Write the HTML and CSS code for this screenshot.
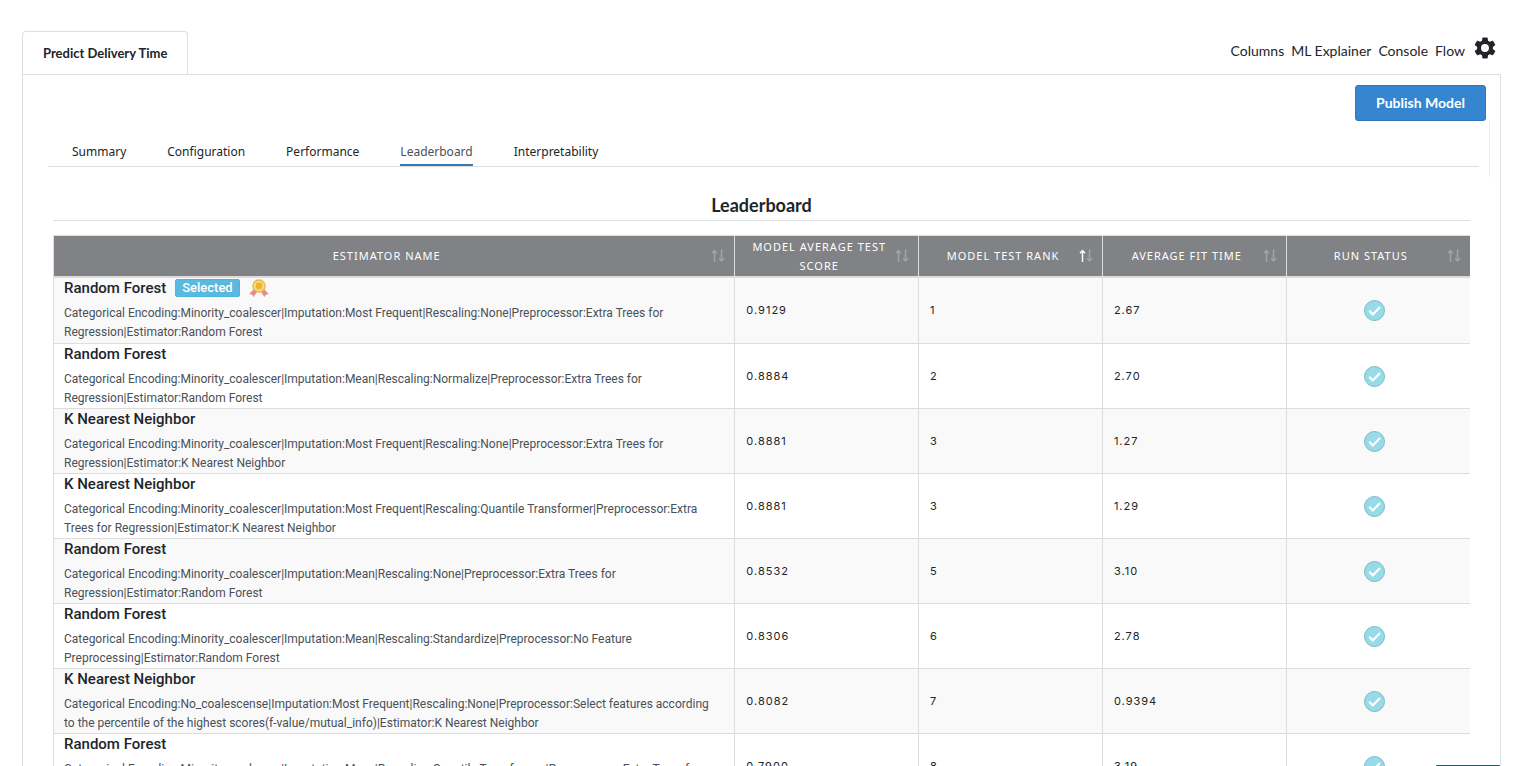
FILE: index.html
```html
<!DOCTYPE html>
<html lang="en">
<head>
  <meta charset="UTF-8" />
  <meta name="viewport" content="width=device-width, initial-scale=1.0"/>
  <title>Predict Delivery Time</title>
  <link rel="stylesheet" href="styles.css">
</head>
<body>

  <!-- Shared icons -->
  <svg class="sprite" aria-hidden="true">
    <symbol id="icon-check" viewBox="0 0 21 21">
      <circle cx="10.5" cy="10.5" r="10" fill="#97dbe8" stroke="#7fb7c4"/>
      <path d="M5.200 10.800l3.600 3.600 7.200-7.400" fill="none" stroke="#fff" stroke-width="2.200"/>
    </symbol>
    <symbol id="icon-sort" viewBox="0 0 14 14">
      <path class="up" d="M3.5 13V1.5M1 4.200l2.500-2.700L6 4.200"/>
      <path class="down" d="M10.5 .5V12M8 9.300l2.500 2.700L13 9.300"/>
    </symbol>
  </svg>

  <div class="page">
    <header class="topbar">
      <h1 class="project-tab">Predict Delivery Time</h1>
      <nav class="tools">
        <a href="#">Columns</a>
        <a href="#">ML Explainer</a>
        <a href="#">Console</a>
        <a href="#">Flow</a>
        <button class="gear" aria-label="Settings">
          <svg viewBox="2 2 20 20"><path d="M19.14 12.94c.04-.3.06-.61.06-.94s-.02-.64-.07-.94l2.03-1.58a.49.49 0 0 0 .12-.61l-1.92-3.32a.49.49 0 0 0-.59-.22l-2.39.96a7 7 0 0 0-1.62-.94l-.36-2.54a.48.48 0 0 0-.48-.41h-3.84a.47.47 0 0 0-.47.41l-.36 2.54c-.59.24-1.13.57-1.62.94l-2.39-.96a.48.48 0 0 0-.59.22L2.74 8.87a.47.47 0 0 0 .12.61l2.03 1.58a6 6 0 0 0 0 1.88l-2.03 1.58a.49.49 0 0 0-.12.61l1.92 3.32c.12.22.37.29.59.22l2.39-.96c.5.38 1.03.7 1.62.94l.36 2.54c.05.24.24.41.48.41h3.84c.24 0 .44-.17.47-.41l.36-2.54c.59-.24 1.13-.56 1.62-.94l2.39.96c.22.08.47 0 .59-.22l1.92-3.32a.47.47 0 0 0-.12-.61zM12 15.6a3.6 3.6 0 1 1 0-7.2 3.6 3.6 0 0 1 0 7.2z"/></svg>
        </button>
      </nav>
    </header>

    <main class="panel">
      <div class="actions">
        <button class="publish">Publish Model</button>
      </div>

      <div class="subnav-wrap">
        <nav class="subnav">
          <a href="#">Summary</a>
          <a href="#">Configuration</a>
          <a href="#">Performance</a>
          <a href="#" class="active">Leaderboard</a>
          <a href="#">Interpretability</a>
        </nav>
      </div>

      <section class="board">
        <h2>Leaderboard</h2>
        <table>
          <thead>
            <tr>
              <th class="name-col"><div class="head"><span>Estimator Name</span><svg class="sort"><use href="#icon-sort"/></svg></div></th>
              <th><div class="head"><span>Model Average Test Score</span><svg class="sort"><use href="#icon-sort"/></svg></div></th>
              <th><div class="head"><span>Model Test Rank</span><svg class="sort asc"><use href="#icon-sort"/></svg></div></th>
              <th><div class="head"><span>Average Fit Time</span><svg class="sort"><use href="#icon-sort"/></svg></div></th>
              <th><div class="head"><span>Run Status</span><svg class="sort"><use href="#icon-sort"/></svg></div></th>
            </tr>
          </thead>
          <tbody>
            <tr>
              <td class="estimator">
                <h3>Random Forest <span class="badge">Selected</span>
                  <svg class="medal" viewBox="0 0 20 18">
                    <path d="M4.500 10.500l3.500 2.500-3.500 5-1.300-2.200L.3 15zM15.500 10.500L12 13l3.500 5 1.300-2.200 2.900-.8z" fill="#e28c8c"/>
                    <circle cx="10" cy="7" r="6" fill="#f8dc8c" stroke="#e8b84a" stroke-width="1.500"/>
                    <circle cx="10" cy="7" r="3.400" fill="#f0b429"/>
                  </svg>
                </h3>
                <p>Categorical Encoding:Minority_coalescer|Imputation:Most Frequent|Rescaling:None|Preprocessor:Extra Trees for Regression|Estimator:Random Forest</p>
              </td>
              <td>0.9129</td><td>1</td><td>2.67</td>
              <td class="status"><svg role="img" aria-label="Completed"><use href="#icon-check"/></svg></td>
            </tr>
            <tr>
              <td class="estimator">
                <h3>Random Forest</h3>
                <p>Categorical Encoding:Minority_coalescer|Imputation:Mean|Rescaling:Normalize|Preprocessor:Extra Trees for Regression|Estimator:Random Forest</p>
              </td>
              <td>0.8884</td><td>2</td><td>2.70</td>
              <td class="status"><svg role="img" aria-label="Completed"><use href="#icon-check"/></svg></td>
            </tr>
            <tr>
              <td class="estimator">
                <h3>K Nearest Neighbor</h3>
                <p>Categorical Encoding:Minority_coalescer|Imputation:Most Frequent|Rescaling:None|Preprocessor:Extra Trees for Regression|Estimator:K Nearest Neighbor</p>
              </td>
              <td>0.8881</td><td>3</td><td>1.27</td>
              <td class="status"><svg role="img" aria-label="Completed"><use href="#icon-check"/></svg></td>
            </tr>
            <tr>
              <td class="estimator">
                <h3>K Nearest Neighbor</h3>
                <p>Categorical Encoding:Minority_coalescer|Imputation:Most Frequent|Rescaling:Quantile Transformer|Preprocessor:Extra Trees for Regression|Estimator:K Nearest Neighbor</p>
              </td>
              <td>0.8881</td><td>3</td><td>1.29</td>
              <td class="status"><svg role="img" aria-label="Completed"><use href="#icon-check"/></svg></td>
            </tr>
            <tr>
              <td class="estimator">
                <h3>Random Forest</h3>
                <p>Categorical Encoding:Minority_coalescer|Imputation:Mean|Rescaling:None|Preprocessor:Extra Trees for Regression|Estimator:Random Forest</p>
              </td>
              <td>0.8532</td><td>5</td><td>3.10</td>
              <td class="status"><svg role="img" aria-label="Completed"><use href="#icon-check"/></svg></td>
            </tr>
            <tr>
              <td class="estimator">
                <h3>Random Forest</h3>
                <p>Categorical Encoding:Minority_coalescer|Imputation:Mean|Rescaling:Standardize|Preprocessor:No Feature Preprocessing|Estimator:Random Forest</p>
              </td>
              <td>0.8306</td><td>6</td><td>2.78</td>
              <td class="status"><svg role="img" aria-label="Completed"><use href="#icon-check"/></svg></td>
            </tr>
            <tr>
              <td class="estimator">
                <h3>K Nearest Neighbor</h3>
                <p>Categorical Encoding:No_coalescense|Imputation:Most Frequent|Rescaling:None|Preprocessor:Select features according to the percentile of the highest scores(f-value/mutual_info)|Estimator:K Nearest Neighbor</p>
              </td>
              <td>0.8082</td><td>7</td><td>0.9394</td>
              <td class="status"><svg role="img" aria-label="Completed"><use href="#icon-check"/></svg></td>
            </tr>
            <tr>
              <td class="estimator">
                <h3>Random Forest</h3>
                <p>Categorical Encoding:Minority_coalescer|Imputation:Mean|Rescaling:Quantile Transformer|Preprocessor:Extra Trees for Regression|Estimator:Random Forest</p>
              </td>
              <td>0.7900</td><td>8</td><td>3.19</td>
              <td class="status"><svg role="img" aria-label="Completed"><use href="#icon-check"/></svg></td>
            </tr>
          </tbody>
        </table>
      </section>
    </main>
  </div>

  <div class="drawer"></div>

</body>
</html>
```
FILE: styles.css
```css
* { margin: 0; padding: 0; box-sizing: border-box; }
body {
  height: 100vh;
  background: #fff;
  color: #212529;
  font-family: Lato, "Liberation Sans", sans-serif;
  font-size: 14px;
  overflow: hidden;
}

a {
  color: inherit;
  text-decoration: none;
}

.sprite {
  position: absolute;
  width: 0;
  height: 0;
}

.page {
  padding: 31px 27px 0 22px;
}

/* Top bar */
.topbar {
  display: flex;
  justify-content: space-between;
}

.project-tab {
  height: 43px;
  padding: 0 20px;
  border: 1px solid #dcdfe0;
  border-bottom: none;
  border-radius: 4px 4px 0 0;
  font-size: 13px;
  font-weight: 700;
  line-height: 42px;
}

.tools {
  display: flex;
  align-items: center;
  gap: 7px;
  height: 38px;
  padding-right: 5px;
}

.gear {
  width: 22px;
  height: 22px;
  margin: 0 0 4px 2px;
  border: none;
  background: none;
  cursor: pointer;
}

.gear svg {
  display: block;
  fill: #212529;
}

/* Panel */
.panel {
  border: 1px solid #dcdfe0;
}

.actions {
  display: flex;
  justify-content: flex-end;
  padding: 10px 14px 0 0;
}

.publish {
  height: 36px;
  padding: 0 20px 2px;
  border: 1px solid #2e79bd;
  border-radius: 3px;
  background: #3585d0;
  color: #fff;
  font-family: inherit;
  font-size: 14px;
  font-weight: 700;
  cursor: pointer;
}

.subnav-wrap {
  height: 56px;
  margin: 0 10px;
  padding: 20px 10px 0 15px;
  border-right: 1px solid #eceeef;
}

.subnav {
  display: flex;
  gap: 41px;
  padding-left: 24px;
  border-bottom: 1px solid #dcdfe0;
  font-family: "Noto Sans", sans-serif;
  font-size: 12px;
}

.subnav a {
  height: 25px;
  line-height: 22px;
  border-bottom: 2px solid transparent;
}

.subnav .active {
  border-color: #337ab7;
  color: #495057;
}

/* Leaderboard */
.board {
  padding: 16px 30px 0;
}

.board h2 {
  margin-bottom: 14px;
  padding-bottom: 3px;
  border-bottom: 1px solid #dcdfe0;
  font-size: 18px;
  font-weight: 700;
  line-height: 24px;
  text-align: center;
}

table {
  width: 100%;
  border-collapse: collapse;
  table-layout: fixed;
  border-left: 1px solid #dcdddd;
}

th {
  height: 41px;
  border: 1px solid #dcdddd;
  border-right: none;
  border-bottom-width: 2px;
  background: #808285;
  color: #fff;
  font-family: "Noto Sans", sans-serif;
  font-size: 11px;
  font-weight: 400;
  line-height: 19px;
  letter-spacing: 1px;
  text-transform: uppercase;
}

.name-col {
  width: 48.1%;
}

.head {
  display: flex;
  align-items: center;
  padding: 0 9px 0 8px;
}

.head span {
  flex: 1;
}

.sort {
  width: 14px;
  height: 14px;
  fill: none;
  stroke: #a3a5a7;
  stroke-width: 1.4;
}

.sort.asc {
  --up: #fff;
}

.up {
  stroke: var(--up, #a3a5a7);
}

td {
  height: 65px;
  padding: 0 11px;
  border: 1px solid #dcdddd;
  border-right: none;
  font-family: Inter, sans-serif;
  font-size: 11px;
  letter-spacing: 1px;
}

tbody tr:first-child td {
  height: 67px;
}

tbody tr:nth-child(odd) {
  background: #f9f9f9;
}

.estimator {
  padding: 0 16px 0 10px;
  font-family: Roboto, sans-serif;
  letter-spacing: normal;
  vertical-align: top;
}

.estimator h3 {
  display: flex;
  align-items: center;
  gap: 9px;
  height: 20px;
  margin-bottom: 6px;
  font-size: 15px;
  font-weight: 500;
}

.estimator p {
  color: #495057;
  font-size: 12px;
  line-height: 19px;
}

.badge {
  height: 18px;
  padding: 0 6px;
  border: 1px solid #46b8da;
  border-radius: 2px;
  background: #5bb8de;
  color: #fff;
  font-size: 13px;
  line-height: 16px;
}

.medal {
  width: 20px;
  height: 18px;
}

.status {
  padding: 0 19px 0 11px;
}

.status svg {
  display: block;
  width: 21px;
  height: 21px;
  margin: auto;
}

/* Collapsed drawer at the bottom edge */
.drawer {
  position: fixed;
  right: 28px;
  bottom: 0;
  width: 64px;
  height: 1px;
  border-radius: 1px 1px 0 0;
  background: #285a5c;
}
```
